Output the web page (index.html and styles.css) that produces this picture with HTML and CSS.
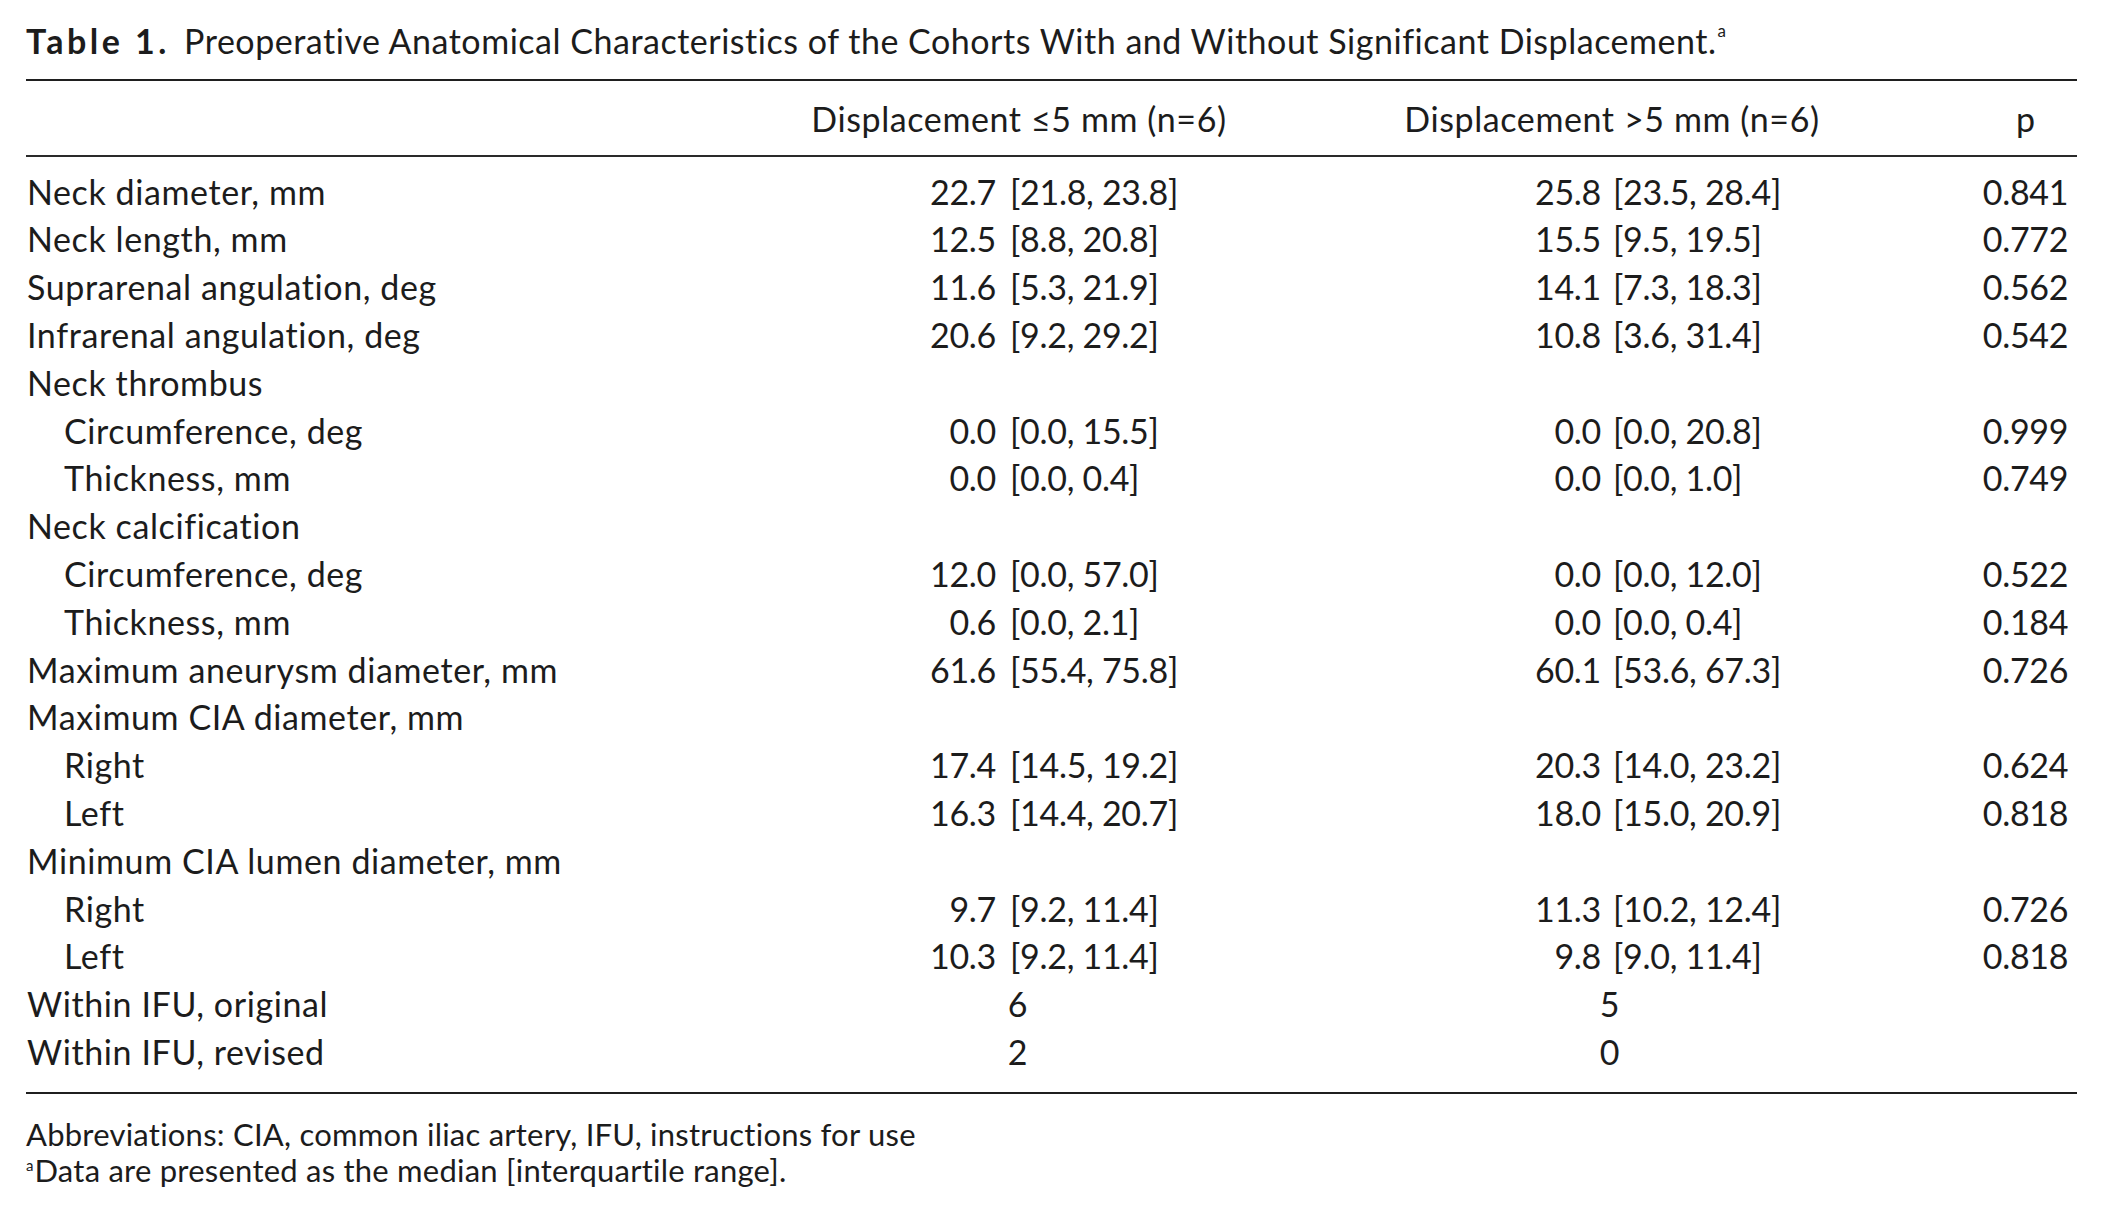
FILE: index.html
```html
<!DOCTYPE html>
<html lang="en">
<head>
<meta charset="utf-8">
<title>Table 1</title>
<link rel="stylesheet" href="styles.css">
</head>
<body>
<div class="page">
  <div class="caption"><span class="caption-label">Table 1.</span> Preoperative Anatomical Characteristics of the Cohorts With and Without Significant Displacement.<sup class="sup-title">a</sup></div>

  <div class="table">
    <div class="thead">
      <div class="row">
        <div class="cell label"></div>
        <div class="cell head head-c2">Displacement ≤5 mm (n=6)</div>
        <div class="cell head head-c3">Displacement &gt;5 mm (n=6)</div>
        <div class="cell pcol phead">p</div>
      </div>
    </div>

    <div class="tbody">
      <div class="row">
        <div class="cell label">Neck diameter, mm</div>
        <div class="cell val c2"><span class="num">22.7</span><span class="rng">[21.8, 23.8]</span></div>
        <div class="cell val c3"><span class="num">25.8</span><span class="rng">[23.5, 28.4]</span></div>
        <div class="cell pcol">0.841</div>
      </div>
      <div class="row">
        <div class="cell label">Neck length, mm</div>
        <div class="cell val c2"><span class="num">12.5</span><span class="rng">[8.8, 20.8]</span></div>
        <div class="cell val c3"><span class="num">15.5</span><span class="rng">[9.5, 19.5]</span></div>
        <div class="cell pcol">0.772</div>
      </div>
      <div class="row">
        <div class="cell label">Suprarenal angulation, deg</div>
        <div class="cell val c2"><span class="num">11.6</span><span class="rng">[5.3, 21.9]</span></div>
        <div class="cell val c3"><span class="num">14.1</span><span class="rng">[7.3, 18.3]</span></div>
        <div class="cell pcol">0.562</div>
      </div>
      <div class="row">
        <div class="cell label">Infrarenal angulation, deg</div>
        <div class="cell val c2"><span class="num">20.6</span><span class="rng">[9.2, 29.2]</span></div>
        <div class="cell val c3"><span class="num">10.8</span><span class="rng">[3.6, 31.4]</span></div>
        <div class="cell pcol">0.542</div>
      </div>
      <div class="row">
        <div class="cell label">Neck thrombus</div>
        <div class="cell val c2"></div>
        <div class="cell val c3"></div>
        <div class="cell pcol"></div>
      </div>
      <div class="row">
        <div class="cell label sub">Circumference, deg</div>
        <div class="cell val c2"><span class="num">0.0</span><span class="rng">[0.0, 15.5]</span></div>
        <div class="cell val c3"><span class="num">0.0</span><span class="rng">[0.0, 20.8]</span></div>
        <div class="cell pcol">0.999</div>
      </div>
      <div class="row">
        <div class="cell label sub">Thickness, mm</div>
        <div class="cell val c2"><span class="num">0.0</span><span class="rng">[0.0, 0.4]</span></div>
        <div class="cell val c3"><span class="num">0.0</span><span class="rng">[0.0, 1.0]</span></div>
        <div class="cell pcol">0.749</div>
      </div>
      <div class="row">
        <div class="cell label">Neck calcification</div>
        <div class="cell val c2"></div>
        <div class="cell val c3"></div>
        <div class="cell pcol"></div>
      </div>
      <div class="row">
        <div class="cell label sub">Circumference, deg</div>
        <div class="cell val c2"><span class="num">12.0</span><span class="rng">[0.0, 57.0]</span></div>
        <div class="cell val c3"><span class="num">0.0</span><span class="rng">[0.0, 12.0]</span></div>
        <div class="cell pcol">0.522</div>
      </div>
      <div class="row">
        <div class="cell label sub">Thickness, mm</div>
        <div class="cell val c2"><span class="num">0.6</span><span class="rng">[0.0, 2.1]</span></div>
        <div class="cell val c3"><span class="num">0.0</span><span class="rng">[0.0, 0.4]</span></div>
        <div class="cell pcol">0.184</div>
      </div>
      <div class="row">
        <div class="cell label">Maximum aneurysm diameter, mm</div>
        <div class="cell val c2"><span class="num">61.6</span><span class="rng">[55.4, 75.8]</span></div>
        <div class="cell val c3"><span class="num">60.1</span><span class="rng">[53.6, 67.3]</span></div>
        <div class="cell pcol">0.726</div>
      </div>
      <div class="row">
        <div class="cell label">Maximum CIA diameter, mm</div>
        <div class="cell val c2"></div>
        <div class="cell val c3"></div>
        <div class="cell pcol"></div>
      </div>
      <div class="row">
        <div class="cell label sub">Right</div>
        <div class="cell val c2"><span class="num">17.4</span><span class="rng">[14.5, 19.2]</span></div>
        <div class="cell val c3"><span class="num">20.3</span><span class="rng">[14.0, 23.2]</span></div>
        <div class="cell pcol">0.624</div>
      </div>
      <div class="row">
        <div class="cell label sub">Left</div>
        <div class="cell val c2"><span class="num">16.3</span><span class="rng">[14.4, 20.7]</span></div>
        <div class="cell val c3"><span class="num">18.0</span><span class="rng">[15.0, 20.9]</span></div>
        <div class="cell pcol">0.818</div>
      </div>
      <div class="row">
        <div class="cell label">Minimum CIA lumen diameter, mm</div>
        <div class="cell val c2"></div>
        <div class="cell val c3"></div>
        <div class="cell pcol"></div>
      </div>
      <div class="row">
        <div class="cell label sub">Right</div>
        <div class="cell val c2"><span class="num">9.7</span><span class="rng">[9.2, 11.4]</span></div>
        <div class="cell val c3"><span class="num">11.3</span><span class="rng">[10.2, 12.4]</span></div>
        <div class="cell pcol">0.726</div>
      </div>
      <div class="row">
        <div class="cell label sub">Left</div>
        <div class="cell val c2"><span class="num">10.3</span><span class="rng">[9.2, 11.4]</span></div>
        <div class="cell val c3"><span class="num">9.8</span><span class="rng">[9.0, 11.4]</span></div>
        <div class="cell pcol">0.818</div>
      </div>
      <div class="row">
        <div class="cell label">Within IFU, original</div>
        <div class="cell single c2-single">6</div>
        <div class="cell single c3-single">5</div>
        <div class="cell pcol"></div>
      </div>
      <div class="row">
        <div class="cell label">Within IFU, revised</div>
        <div class="cell single c2-single">2</div>
        <div class="cell single c3-single">0</div>
        <div class="cell pcol"></div>
      </div>
    </div>
  </div>

  <div class="notes">
    <p class="note">Abbreviations: CIA, common iliac artery, IFU, instructions for use</p>
    <p class="note"><sup class="sup-note">a</sup>Data are presented as the median [interquartile range].</p>
  </div>
</div>
</body>
</html>
```
FILE: styles.css
```css
html, body {
  margin: 0;
  padding: 0;
  background: #ffffff;
}

body {
  font-family: "Lato", "Open Sans", sans-serif;
  color: #1c1c1c;
  font-size: 34px;
  letter-spacing: 0.6px;
}

.page {
  margin-left: 26px;
  width: 2051px;
  padding-top: 17px;
}

.caption {
  line-height: 47.8px;
  height: 47.8px;
  letter-spacing: 0.52px;
  white-space: nowrap;
}

.caption-label {
  font-weight: 700;
  letter-spacing: 3.5px;
  margin-right: 5px;
}

.sup-title {
  font-size: 17px;
  line-height: 0;
  vertical-align: 17px;
  letter-spacing: 0;
  margin-left: 1px;
}

.table {
  margin-top: 14px;
  border-top: 2px solid #1f1f1f;
  border-bottom: 2px solid #1f1f1f;
}

.thead {
  padding-top: 14px;
  padding-bottom: 12px;
  border-bottom: 2px solid #2a2a2a;
}

.tbody {
  padding-top: 11px;
  padding-bottom: 16px;
}

.row {
  display: grid;
  grid-template-columns: 678px 600px 608px 165px;
  line-height: 47.8px;
  height: 47.8px;
}

.cell {
  white-space: nowrap;
}

.label {
  padding-left: 1px;
}

.label.sub {
  padding-left: 38px;
}

.head {
  text-align: center;
}

.head-c2 {
  padding-left: 30px;
}

.head-c3 {
  padding-left: 8px;
}

.val {
  display: grid;
  grid-template-columns: 1fr 1fr;
  letter-spacing: -0.3px;
}

.c2 .num {
  text-align: right;
  padding-right: 8px;
}

.c2 .rng {
  text-align: left;
  padding-left: 6px;
}

.c3 .num {
  text-align: right;
  padding-right: 7px;
}

.c3 .rng {
  text-align: left;
  padding-left: 5px;
}

.single {
  text-align: center;
}

.c2-single {
  padding-left: 28px;
}

.c3-single {
  padding-left: 4px;
}

.pcol {
  text-align: center;
  padding-left: 62px;
  letter-spacing: -0.3px;
}

.phead {
  letter-spacing: 0;
}

.notes {
  padding-top: 22px;
}

.note {
  margin: 0;
  font-size: 31px;
  line-height: 36px;
  letter-spacing: 0.23px;
  white-space: nowrap;
}

.sup-note {
  font-size: 15px;
  line-height: 0;
  vertical-align: 11px;
  letter-spacing: 0;
  margin-right: 1px;
}
```
